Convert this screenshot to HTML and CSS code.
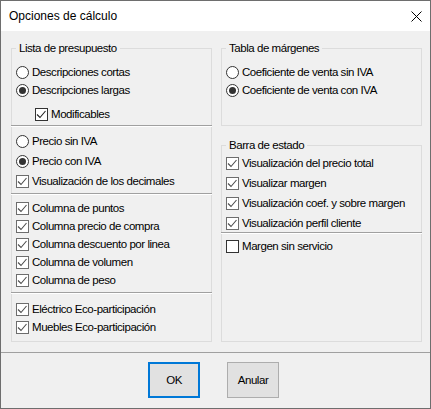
FILE: index.html
```html
<!DOCTYPE html>
<html lang="es">
<head>
<meta charset="utf-8">
<title>Opciones de cálculo</title>
<link rel="stylesheet" href="styles.css">
</head>
<body>
<div class="window">
  <div class="titlebar">
    <span class="title">Opciones de cálculo</span>
    <svg class="close" width="11" height="11" viewBox="0 0 11 11"><path d="M0.5 0.5L10.5 10.5M10.5 0.5L0.5 10.5" stroke="#000" stroke-width="1" fill="none"/></svg>
  </div>
  <div class="content">
    <fieldset class="group group-left">
      <legend>Lista de presupuesto</legend>
      <div class="sec sec1">
        <div class="row"><span class="radio"></span><span>Descripciones cortas</span></div>
        <div class="row"><span class="radio on"></span><span>Descripciones largas</span></div>
        <div class="row indent"><span class="check dark on"><svg viewBox="0 0 13 13"><path d="M2 6.5L5 9.5L10.5 3" /></svg></span><span>Modificables</span></div>
      </div>
      <div class="sep"></div>
      <div class="sec sec2">
        <div class="row tall"><span class="radio"></span><span>Precio sin IVA</span></div>
        <div class="row tall"><span class="radio on"></span><span>Precio con IVA</span></div>
        <div class="row tall"><span class="check on"><svg viewBox="0 0 13 13"><path d="M2 6.5L5 9.5L10.5 3" /></svg></span><span>Visualización de los decimales</span></div>
      </div>
      <div class="sep"></div>
      <div class="sec sec3">
        <div class="row"><span class="check on"><svg viewBox="0 0 13 13"><path d="M2 6.5L5 9.5L10.5 3" /></svg></span><span>Columna de puntos</span></div>
        <div class="row"><span class="check on"><svg viewBox="0 0 13 13"><path d="M2 6.5L5 9.5L10.5 3" /></svg></span><span>Columna precio de compra</span></div>
        <div class="row"><span class="check on"><svg viewBox="0 0 13 13"><path d="M2 6.5L5 9.5L10.5 3" /></svg></span><span>Columna descuento por linea</span></div>
        <div class="row"><span class="check on"><svg viewBox="0 0 13 13"><path d="M2 6.5L5 9.5L10.5 3" /></svg></span><span>Columna de volumen</span></div>
        <div class="row"><span class="check on"><svg viewBox="0 0 13 13"><path d="M2 6.5L5 9.5L10.5 3" /></svg></span><span>Columna de peso</span></div>
      </div>
      <div class="sep sep3"></div>
      <div class="sec sec4">
        <div class="row"><span class="check on"><svg viewBox="0 0 13 13"><path d="M2 6.5L5 9.5L10.5 3" /></svg></span><span>Eléctrico Eco-participación</span></div>
        <div class="row"><span class="check on"><svg viewBox="0 0 13 13"><path d="M2 6.5L5 9.5L10.5 3" /></svg></span><span>Muebles Eco-participación</span></div>
      </div>
    </fieldset>
    <div class="col-right">
      <fieldset class="group group-tabla">
        <legend>Tabla de márgenes</legend>
        <div class="sec sec1">
          <div class="row"><span class="radio"></span><span>Coeficiente de venta sin IVA</span></div>
          <div class="row"><span class="radio on"></span><span>Coeficiente de venta con IVA</span></div>
        </div>
      </fieldset>
      <fieldset class="group group-barra">
        <legend>Barra de estado</legend>
        <div class="sec secb">
          <div class="row tall"><span class="check on"><svg viewBox="0 0 13 13"><path d="M2 6.5L5 9.5L10.5 3" /></svg></span><span>Visualización del precio total</span></div>
          <div class="row tall"><span class="check on"><svg viewBox="0 0 13 13"><path d="M2 6.5L5 9.5L10.5 3" /></svg></span><span>Visualizar margen</span></div>
          <div class="row tall"><span class="check on"><svg viewBox="0 0 13 13"><path d="M2 6.5L5 9.5L10.5 3" /></svg></span><span>Visualización coef. y sobre margen</span></div>
          <div class="row tall"><span class="check on"><svg viewBox="0 0 13 13"><path d="M2 6.5L5 9.5L10.5 3" /></svg></span><span>Visualización perfil cliente</span></div>
        </div>
        <div class="sep"></div>
        <div class="sec secc">
          <div class="row"><span class="check dark"></span><span>Margen sin servicio</span></div>
        </div>
      </fieldset>
    </div>
  </div>
  <div class="footer">
    <div class="btn default">OK</div>
    <div class="btn">Anular</div>
  </div>
</div>
</body>
</html>
```

FILE: styles.css
```css
html, body {
  margin: 0;
  padding: 0;
  background: #f0f0f0;
}
body {
  font-family: "Liberation Sans", Arial, sans-serif;
  font-size: 11.5px;
  letter-spacing: -0.45px;
  color: #000;
}
.window {
  width: 431px;
  height: 409px;
  box-sizing: border-box;
  border: 1px solid #6e6e6e;
  background: #f0f0f0;
  display: flex;
  flex-direction: column;
}
.titlebar {
  height: 30px;
  flex: none;
  background: #fff;
  display: flex;
  align-items: center;
  justify-content: space-between;
  padding: 0 8px 0 8px;
}
.title {
  font-size: 12px;
  letter-spacing: 0;
}
.close {
  display: block;
}
.content {
  display: grid;
  grid-template-columns: 201px 201px;
  grid-template-rows: 301px;
  column-gap: 9px;
  padding: 10px 0 0 10px;
  flex: none;
}
.group {
  margin: 0;
  padding: 0 4px;
  border: 1px solid #dcdcdc;
  min-width: 0;
  box-sizing: border-box;
}
.group legend {
  padding: 0 3px;
  line-height: 14px;
  height: 14px;
}
.col-right {
  display: flex;
  flex-direction: column;
  gap: 12px;
}
.group-tabla {
  padding-bottom: 26px;
  flex: none;
}
.group-barra {
  flex: 1;
}
.row {
  display: flex;
  align-items: center;
  gap: 3px;
  height: 18px;
  white-space: nowrap;
}
.row.tall {
  height: 20px;
}
.row.indent {
  margin-top: 6px;
  padding-left: 19px;
}
.sec1 { padding-top: 8px; }
.sec2 { padding-top: 4px; }
.sec3 { padding-top: 4px; }
.sec4 { padding-top: 6px; }
.secb { padding-top: 1px; }
.secc { padding-top: 3px; }
.sep {
  height: 0;
  border-top: 1px solid #a0a0a0;
  border-bottom: 1px solid #ffffff;
  margin: 2px -5px 0 -5px;
}
.sep3 { margin-top: 3px; }
.group-barra .sep { margin-top: -1px; }
.radio {
  width: 13px;
  height: 13px;
  box-sizing: border-box;
  border: 1px solid #333;
  border-radius: 50%;
  background: #fff;
  flex: none;
  display: flex;
  align-items: center;
  justify-content: center;
}
.radio.on::after {
  content: "";
  width: 7px;
  height: 7px;
  border-radius: 50%;
  background: #333;
}
.check {
  width: 13px;
  height: 13px;
  box-sizing: border-box;
  border: 1px solid #6d6d6d;
  background: #fff;
  flex: none;
  position: relative;
}
.check.dark {
  border-color: #333;
}
.check svg {
  position: absolute;
  left: -1px;
  top: -1px;
  width: 13px;
  height: 13px;
}
.check svg path {
  fill: none;
  stroke: #4d4d4d;
  stroke-width: 1.1;
}
.check.dark svg path {
  stroke: #222;
}
.footer {
  margin-top: 10px;
  border-top: 1px solid #a0a0a0;
  padding: 9px 0 0 147px;
  display: flex;
  gap: 27px;
}
.btn {
  width: 52px;
  height: 36px;
  box-sizing: border-box;
  border: 1px solid #adadad;
  background: #e1e1e1;
  display: flex;
  align-items: center;
  justify-content: center;
}
.btn.default {
  border: 2px solid #0078d7;
}
```
